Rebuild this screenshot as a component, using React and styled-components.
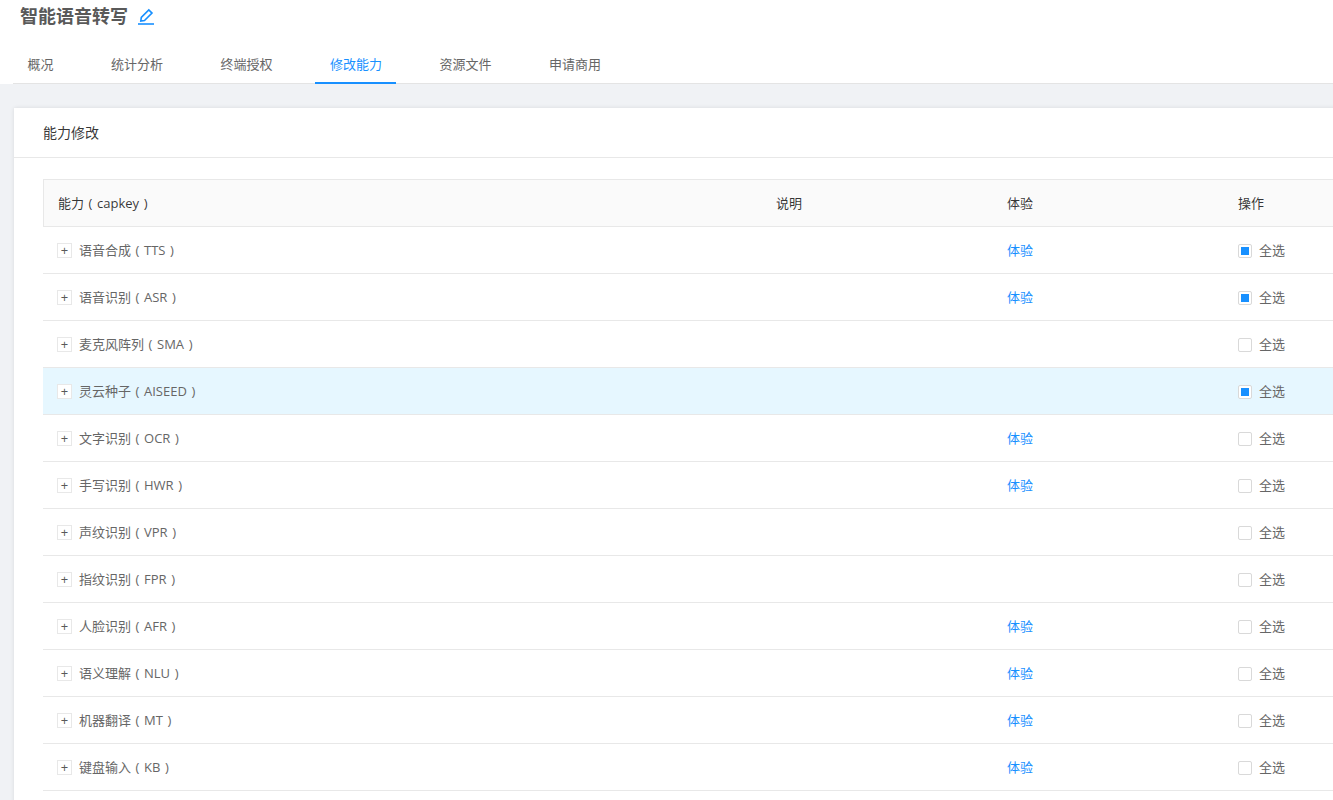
import React from 'react';
import styled, { createGlobalStyle } from 'styled-components';

const GlobalStyle = createGlobalStyle`
  html, body {
    margin: 0;
    padding: 0;
    height: 100%;
    overflow: hidden;
    background: #f0f2f5;
    font-family: "Open Sans", "Noto Sans CJK SC", sans-serif;
    font-size: 13px;
    color: #666;
  }
`;

const Page = styled.div`
  width: 1333px;
  height: 800px;
  overflow: hidden;
`;

const Header = styled.header`
  background: #fff;
  height: 84px;
  padding-left: 13px;
  box-sizing: border-box;
`;

const TitleRow = styled.div`
  display: flex;
  align-items: flex-start;
  height: 35px;
  padding-left: 7px;
`;

const Title = styled.h1`
  margin: 0;
  font-size: 18px;
  line-height: 33px;
  font-weight: 700;
  color: #595959;
`;

const EditIcon = styled.svg`
  width: 18px;
  height: 18px;
  margin: 8px 0 0 9px;
  color: #1890ff;
`;

const Tabs = styled.nav`
  display: flex;
  height: 49px;
  margin-left: -0.5px;
  box-sizing: border-box;
  border-bottom: 1px solid #e4e4e4;
`;

const Tab = styled.div`
  box-sizing: border-box;
  height: 49px;
  padding: 0 14px 0 15px;
  margin-right: 28.5px;
  line-height: 58px;
  color: ${props => (props.$active ? '#1890ff' : '#666')};
  border-bottom: 2px solid ${props => (props.$active ? '#1890ff' : 'transparent')};
`;

const Card = styled.section`
  width: 1400px;
  margin: 24px 0 0 14px;
  padding-bottom: 40px;
  background: #fff;
  box-shadow: 0 0 4px rgba(0, 0, 0, 0.1);
`;

const CardTitle = styled.div`
  height: 50px;
  box-sizing: border-box;
  padding-left: 29px;
  font-size: 14px;
  line-height: 50px;
  color: rgba(0, 0, 0, 0.8);
  border-bottom: 1px solid #e8e8e8;
`;

const CardBody = styled.div`
  padding: 21px 0 0 29px;
`;

const Row = styled.div`
  display: grid;
  grid-template-columns: 718px 231px 231px 178px;
  height: 47px;
  box-sizing: border-box;
  padding-bottom: 2px;
  align-items: center;
  border-bottom: 1px solid #e8e8e8;
  background: ${props => (props.$active ? '#e6f7ff' : '#fff')};
`;

const HeadRow = styled(Row)`
  grid-template-columns: 717px 231px 231px 178px;
  height: 48px;
  background: #fafafa;
  border-top: 1px solid #e8e8e8;
  border-left: 1px solid #e8e8e8;
  color: rgba(0, 0, 0, 0.8);
`;

const Cell = styled.div`
  padding-left: 15px;
`;

const HeadFirst = styled(Cell)`
  padding-left: 14px;
`;

const NameCell = styled(Cell)`
  display: flex;
  align-items: center;
  padding-left: 14px;
`;

const Expand = styled.span`
  display: flex;
  align-items: center;
  justify-content: center;
  width: 15px;
  height: 15px;
  box-sizing: border-box;
  margin: 3px 7px 0 0;
  border: 1px solid #e8e8e8;
  background: #fff;
  color: #595959;
  font-size: 13px;
  line-height: 1;
`;

// round brackets sit in the middle of a full-width slot in the reference font
const Paren = styled.span`
  display: inline-block;
  width: 13px;
  text-align: center;
`;

const TryLink = styled.a`
  color: #1890ff;
  text-decoration: none;
`;

const SelectAll = styled.label`
  display: flex;
  align-items: center;
`;

const Box = styled.span`
  display: flex;
  align-items: center;
  justify-content: center;
  width: 14px;
  height: 14px;
  box-sizing: border-box;
  margin: 4px 7px 0 0;
  background: #fff;
  border: 1px solid #d9d9d9;
  border-radius: 2px;

  &::after {
    content: '';
    display: ${props => (props.$checked ? 'block' : 'none')};
    width: 8px;
    height: 8px;
    background: #1890ff;
  }
`;

const tabs = ['概况', '统计分析', '终端授权', '修改能力', '资源文件', '申请商用'];

const rows = [
  { name: '语音合成', key: 'TTS', demo: true, checked: true },
  { name: '语音识别', key: 'ASR', demo: true, checked: true },
  { name: '麦克风阵列', key: 'SMA' },
  { name: '灵云种子', key: 'AISEED', checked: true, active: true },
  { name: '文字识别', key: 'OCR', demo: true },
  { name: '手写识别', key: 'HWR', demo: true },
  { name: '声纹识别', key: 'VPR' },
  { name: '指纹识别', key: 'FPR' },
  { name: '人脸识别', key: 'AFR', demo: true },
  { name: '语义理解', key: 'NLU', demo: true },
  { name: '机器翻译', key: 'MT', demo: true },
  { name: '键盘输入', key: 'KB', demo: true },
];

const App = () => (
  <Page>
    <GlobalStyle />
    <Header>
      <TitleRow>
        <Title>智能语音转写</Title>
        <EditIcon viewBox="0 0 18 18" fill="none" stroke="currentColor" strokeWidth="1.6">
          <path d="M3.8 13 L4.3 9.4 L11.8 1.9 L15 5.1 L7.5 12.6 Z" />
          <path d="M1 16 H17" />
        </EditIcon>
      </TitleRow>
      <Tabs>
        {tabs.map(t => (
          <Tab key={t} $active={t === '修改能力'}>{t}</Tab>
        ))}
      </Tabs>
    </Header>
    <Card>
      <CardTitle>能力修改</CardTitle>
      <CardBody>
        <HeadRow>
          <HeadFirst>能力<Paren>(</Paren>capkey<Paren>)</Paren></HeadFirst>
          <Cell>说明</Cell>
          <Cell>体验</Cell>
          <Cell>操作</Cell>
        </HeadRow>
        {rows.map(r => (
          <Row key={r.key} $active={r.active}>
            <NameCell>
              <Expand>+</Expand>
              <span>{r.name}<Paren>(</Paren>{r.key}<Paren>)</Paren></span>
            </NameCell>
            <Cell />
            <Cell>{r.demo && <TryLink href="#">体验</TryLink>}</Cell>
            <Cell>
              <SelectAll>
                <Box $checked={r.checked} />
                全选
              </SelectAll>
            </Cell>
          </Row>
        ))}
      </CardBody>
    </Card>
  </Page>
);

export default App;
